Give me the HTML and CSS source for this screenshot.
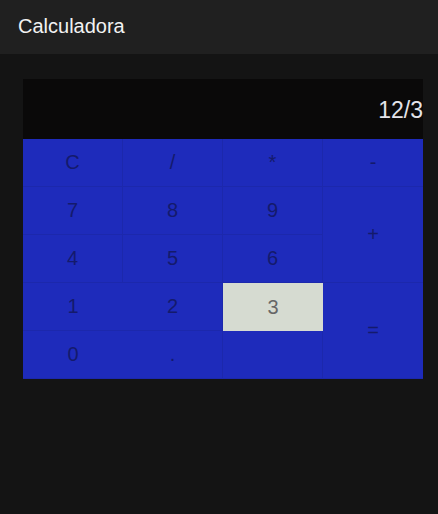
FILE: index.html
```html
<!DOCTYPE html>
<html lang="es">
<head>
<meta charset="utf-8">
<title>Calculadora</title>
<link rel="stylesheet" href="styles.css">
</head>
<body>
<header class="topbar">Calculadora</header>
<main class="content">
  <div class="calc">
    <div class="display">12/3</div>
    <div class="keys">
      <div class="key">C</div>
      <div class="key">/</div>
      <div class="key">*</div>
      <div class="key">-</div>
      <div class="key">7</div>
      <div class="key">8</div>
      <div class="key">9</div>
      <div class="key tall">+</div>
      <div class="key">4</div>
      <div class="key">5</div>
      <div class="key">6</div>
      <div class="key">1</div>
      <div class="key">2</div>
      <div class="key active">3</div>
      <div class="key tall">=</div>
      <div class="key">0</div>
      <div class="key">.</div>
      <div class="key"></div>
    </div>
  </div>
</main>
</body>
</html>
```

FILE: styles.css
```css
html, body {
  margin: 0;
  padding: 0;
}
body {
  background: #141414;
  font-family: "Liberation Sans", Arial, sans-serif;
  width: 438px;
  height: 514px;
}
.topbar {
  height: 54px;
  background: #202020;
  color: #f2f2f2;
  font-size: 20px;
  display: flex;
  align-items: center;
  padding-left: 18px;
  padding-bottom: 1px;
  box-sizing: border-box;
}
.content {
  padding: 25px 15px 0 23px;
}
.calc {
  width: 400px;
}
.display {
  height: 60px;
  background: #0a0909;
  color: #e4e4ea;
  font-size: 23px;
  display: flex;
  align-items: center;
  justify-content: flex-end;
  padding-top: 2px;
  box-sizing: border-box;
}
.keys {
  display: grid;
  grid-template-columns: repeat(4, 100px);
  grid-template-rows: repeat(5, 48px);
  background: #1e2bbb;
}
.key {
  display: flex;
  align-items: center;
  justify-content: center;
  font-size: 20px;
  color: #141a6c;
  border-right: 1px solid #1c28ac;
  border-bottom: 1px solid #1c28ac;
  box-sizing: border-box;
}
.key:nth-child(4n) {
  border-right: none;
}
.tall {
  grid-row: span 2;
  grid-column: 4;
  border-right: none;
}
.active {
  background: #d6dbd1;
  color: #666;
  border: none;
}
```
